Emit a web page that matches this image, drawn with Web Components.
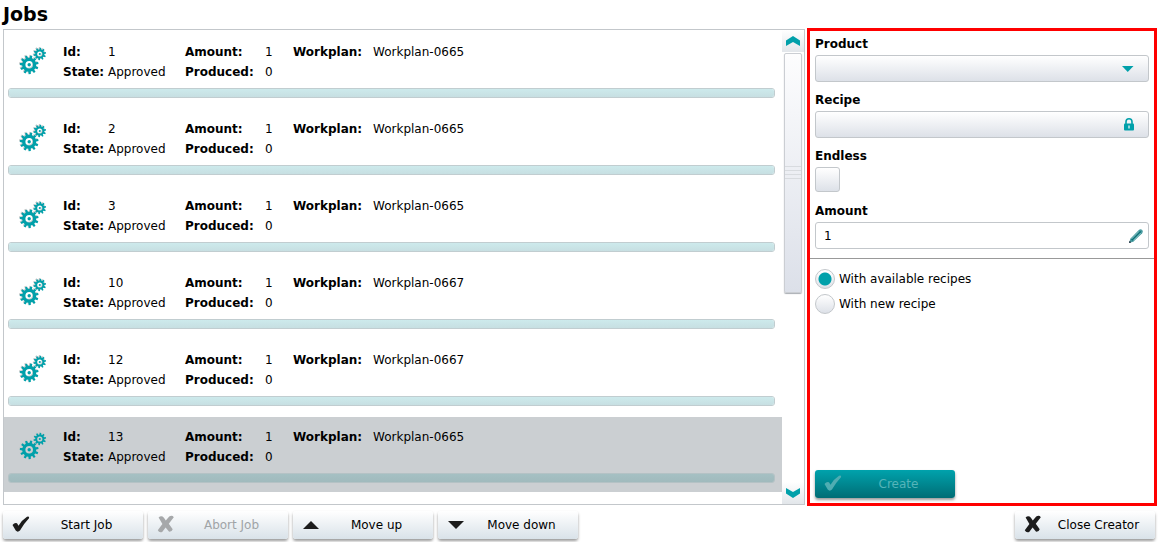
<!DOCTYPE html>
<html lang="en">
<head>
<meta charset="utf-8">
<title>Jobs</title>
<style>
  html, body { margin: 0; background: #fff; }
  body {
    font: 12px/20px Verdana, "DejaVu Sans", sans-serif;
    color: #000;
    --teal: #00a0aa;
    --line: #c3c7cb;
    --face: linear-gradient(#ffffff, #dde1e8);
  }
</style>
</head>
<body>
<jobs-page></jobs-page>

<template id="jobs-page">
  <style>
    :host { display: flex; flex-direction: column; box-sizing: border-box; min-height: 100vh; padding: 0 1px 3px 3px; }
    h1 { margin: 0; font-size: 19px; line-height: 28px; font-weight: bold; }
    main { flex: 1; display: grid; grid-template-columns: minmax(0, 802fr) minmax(0, 350fr); gap: 2px; }
    job-list { margin: 1px 0; }
    footer { display: flex; gap: 5px; padding-top: 5px; }
    .end { margin: 0 2px 0 auto; }
  </style>
  <h1>Jobs</h1>
  <main>
    <job-list>
      <job-item number="1" workplan="Workplan-0665"></job-item>
      <job-item number="2" workplan="Workplan-0665"></job-item>
      <job-item number="3" workplan="Workplan-0665"></job-item>
      <job-item number="10" workplan="Workplan-0667"></job-item>
      <job-item number="12" workplan="Workplan-0667"></job-item>
      <job-item number="13" workplan="Workplan-0665" selected></job-item>
    </job-list>
    <job-creator></job-creator>
  </main>
  <footer>
    <action-button icon="check">Start Job</action-button>
    <action-button icon="cross" disabled>Abort Job</action-button>
    <action-button icon="up">Move up</action-button>
    <action-button icon="down">Move down</action-button>
    <action-button icon="cross" class="end">Close Creator</action-button>
  </footer>
</template>

<template id="job-list">
  <style>
    :host { display: flex; border: 1px solid var(--line); }
    .rows { flex: 1; min-width: 0; display: flex; flex-direction: column; gap: 2px; padding: 2px 0; }
    .bar { width: 22px; display: flex; flex-direction: column; }
    button { height: 22px; padding: 0; border: 0; background: linear-gradient(#fff, #e2e6ea); display: grid; place-items: center; }
    .track { flex: 1; padding: 1px 2px; }
    .thumb {
      box-sizing: border-box; height: 56%; border: 1px solid #cbced3; border-radius: 2px;
      background: linear-gradient(#fdfdfe, #dce0e9); box-shadow: 0 1px 1px #a9adb3;
      display: flex; flex-direction: column; justify-content: center; gap: 3px;
    }
    .thumb i { height: 1px; background: #d8dbdf; }
  </style>
  <div class="rows"><slot></slot></div>
  <div class="bar">
    <button type="button" aria-label="Scroll up"><svg width="14" height="10"><path d="M0 4.500 7 0l7 4.500v5.500L7 6 0 10z" fill="#00a0aa"/></svg></button>
    <div class="track"><div class="thumb"><i></i><i></i><i></i><i></i></div></div>
    <button type="button" aria-label="Scroll down"><svg width="14" height="10"><path d="M0 5.500 7 10l7-4.500V0L7 4 0 0z" fill="#00a0aa"/></svg></button>
  </div>
</template>

<template id="job-item">
  <style>
    :host { display: block; box-sizing: border-box; height: 75px; padding: 10px 7px 8px 4px; }
    :host([selected]) { background: #cbcfd2; }
    .info { display: flex; height: 46px; }
    .icon { flex: none; width: 28px; height: 28px; margin: 5px 16px 0 11px; }
    dl { margin: 0; display: grid; grid-template-columns: 45px 77px 80px 28px 80px auto; grid-auto-rows: 20px; white-space: nowrap; }
    dt { font-weight: bold; }
    dd { margin: 0; }
    progress { appearance: none; display: block; box-sizing: border-box; width: 100%; height: 10px; border: 1px solid #c1cdd0; border-radius: 3px; overflow: hidden; background: #cbe6e9; }
    progress::-webkit-progress-bar { background: linear-gradient(#cdeaec, #c7dfe2); }
    :host([selected]) progress { border-color: #b4c2c5; background: #a3bec1; }
    :host([selected]) progress::-webkit-progress-bar { background: linear-gradient(#a5c0c3, #a0babd); }
  </style>
  <div class="info">
    <svg class="icon" viewBox="0 0 28 28" aria-hidden="true"></svg>
    <dl>
      <dt>Id:</dt><dd class="number"></dd><dt>Amount:</dt><dd>1</dd><dt>Workplan:</dt><dd class="plan"></dd>
      <dt>State:</dt><dd>Approved</dd><dt>Produced:</dt><dd>0</dd>
    </dl>
  </div>
  <progress value="0" max="1" aria-label="Progress"></progress>
</template>

<template id="job-creator">
  <style>
    :host { display: flex; flex-direction: column; border: 3px solid #f00; }
    .fields { padding: 2px 5px 9px; }
    .fields > label { display: block; font-weight: bold; line-height: 20px; padding: 1px 0; }
    .box { display: grid; margin-bottom: 7px; }
    .box > * { grid-area: 1 / 1; }
    .box svg { align-self: center; justify-self: end; pointer-events: none; }
    select, input { appearance: none; box-sizing: border-box; margin: 0; font: inherit; color: inherit; border: 1px solid var(--line); border-radius: 3px; background: var(--face); }
    select, .text { width: 100%; height: 27px; padding: 0 8px; }
    #amount { background: #fff; }
    #endless { display: block; width: 25px; height: 25px; margin-bottom: 8px; }
    .drop { margin-right: 15px; }
    .lock { margin-right: 15px; }
    .pen { margin-right: 6px; }
    .box.last { margin: 0; }
    fieldset { margin: 0; padding: 10px 5px; border: 0; border-top: 1px solid #999; display: grid; gap: 5px; }
    fieldset label { display: flex; align-items: center; gap: 4px; }
    [type=radio] { width: 20px; height: 20px; border-radius: 50%; }
    [type=radio]:checked { background: radial-gradient(circle, var(--teal) 0 6px, #fff0 7px), var(--face); }
    action-button { margin: auto 0 5px 5px; }
  </style>
  <div class="fields">
    <label for="product">Product</label>
    <div class="box">
      <select id="product"><option></option></select>
      <svg class="drop" width="12" height="6"><path d="M0 0h11.500L5.750 6z" fill="#00a0aa"/></svg>
    </div>
    <label for="recipe">Recipe</label>
    <div class="box">
      <input class="text" id="recipe" readonly>
      <svg class="lock" width="10" height="13"><path d="M2 6V3.800a3 3 0 0 1 6 0V6" fill="none" stroke="#00a0aa" stroke-width="1.600"/><rect y="5.500" width="10" height="7" rx="1" fill="#00a0aa"/><path d="M5 7.500v3" stroke="#fff" stroke-width="1.200"/></svg>
    </div>
    <label for="endless">Endless</label>
    <input type="checkbox" id="endless">
    <label for="amount">Amount</label>
    <div class="box last">
      <input class="text" id="amount" value="1">
      <svg class="pen" width="14" height="14"><path d="M.300 13.700 1.300 9.700 9.800 1Q11.500-.300 13.200 1q1.200 1.500 0 3.200L4.300 12.700z" fill="#4b9da1"/><path d="M2.800 11.200 11.600 2.400" stroke="#0b7178" stroke-width="2"/><path d="M2.700 9.900 10.200 2.300M4.300 11.400l7.600-7.600" stroke="#c4e4e4" stroke-width=".600"/><path d="M0 14l.600-2.200 1.600 1.600z" fill="#123"/></svg>
    </div>
  </div>
  <fieldset>
    <label><input type="radio" name="mode" checked>With available recipes</label>
    <label><input type="radio" name="mode">With new recipe</label>
  </fieldset>
  <action-button icon="check" primary disabled>Create</action-button>
</template>

<template id="action-button">
  <style>
    :host { display: block; width: 140px; }
    button {
      box-sizing: border-box; width: 100%; height: 28px; padding: 0; border: 0; border-radius: 3px;
      display: flex; align-items: center; font: inherit; color: #000;
      background: linear-gradient(#fff, #d9e2e9); box-shadow: 0 2px 3px #0006;
    }
    button:disabled { color: #a0a4a7; }
    svg { flex: none; width: 18px; height: 18px; margin: 0 0 2px 9px; fill: #1c1c1c; }
    button:disabled svg { fill: #a6a8aa; }
    span { flex: 1; text-align: center; }
    :host([primary]) button { background: linear-gradient(#00a2ac, #006d75); color: #55b4b9; }
    :host([primary]) svg { fill: #4fadb2; }
    :host([primary]) button:disabled { color: #55b4b9; }
    :host([primary]) button:disabled svg { fill: #4fadb2; }
  </style>
  <button type="button"><svg viewBox="0 0 18 18" aria-hidden="true"><path/></svg><span><slot></slot></span></button>
</template>

<script>
  const GLYPHS = {
    check: 'M.500 10Q2.500 7.300 5 8.200L6.500 10.800Q10 4.800 15 1.700Q17.800 1 17 3.300Q12 8.500 8 15.500Q5.800 17.600 3.900 15.800Z',
    cross: 'M1.600 2.500Q4.500 0 6.900 2.800L8.800 5.600 12.200 1.500Q15.200-.300 16.800 2.200L11.800 8.800 15.700 14.200Q15 17 11.900 16.600L8.600 12.500 5.200 16.900Q2.200 18 .800 15.300L5.400 9Z',
    up: 'M1 14 9 6l8 8z',
    down: 'M1 6h16l-8 8z'
  };

  // Outline of a toothed wheel with a round hole, drawn with the even-odd rule.
  function gear(cx, cy, outer, inner, hole, teeth) {
    const step = Math.PI * 2 / teeth, points = [];
    for (let i = 0; i < teeth; i++) {
      [[-.300, inner], [-.200, outer], [.200, outer], [.300, inner]].forEach(([t, r]) => {
        const a = (i + t) * step - .200;
        points.push((cx + r * Math.cos(a)).toFixed(2) + ' ' + (cy + r * Math.sin(a)).toFixed(2));
      });
    }
    return `M${points.join('L')}ZM${cx - hole} ${cy}a${hole} ${hole} 0 1 0 ${hole * 2} 0a${hole} ${hole} 0 1 0 ${-hole * 2} 0Z`;
  }
  const big = gear(10.2, 17.8, 9.4, 7, 3.8, 11);
  const small = gear(20.8, 7, 6.3, 4.6, 2.6, 10);
  const GEARS = `<g fill-rule="evenodd"><path d="${big}${small}" fill="#c6c9ca" transform="translate(-.8 -.8)"/>
    <path d="${big}${small}" fill="#00a0aa"/></g>
    <circle cx="10.2" cy="17.8" r="1.700" fill="#00a0aa"/><circle cx="20.8" cy="7" r="1.100" fill="#00a0aa"/>`;

  class Base extends HTMLElement {
    constructor() {
      super();
      const template = document.getElementById(this.localName);
      this.attachShadow({ mode: 'open' }).append(template.content.cloneNode(true));
    }
  }
  customElements.define('action-button', class extends Base {
    connectedCallback() {
      this.shadowRoot.querySelector('path').setAttribute('d', GLYPHS[this.getAttribute('icon')]);
      this.shadowRoot.querySelector('button').disabled = this.hasAttribute('disabled');
    }
  });
  customElements.define('job-item', class extends Base {
    connectedCallback() {
      this.shadowRoot.querySelector('.icon').innerHTML = GEARS;
      this.shadowRoot.querySelector('.number').textContent = this.getAttribute('number');
      this.shadowRoot.querySelector('.plan').textContent = this.getAttribute('workplan');
    }
  });
  customElements.define('job-list', class extends Base {});
  customElements.define('job-creator', class extends Base {});
  customElements.define('jobs-page', class extends Base {});
</script>
</body>
</html>
